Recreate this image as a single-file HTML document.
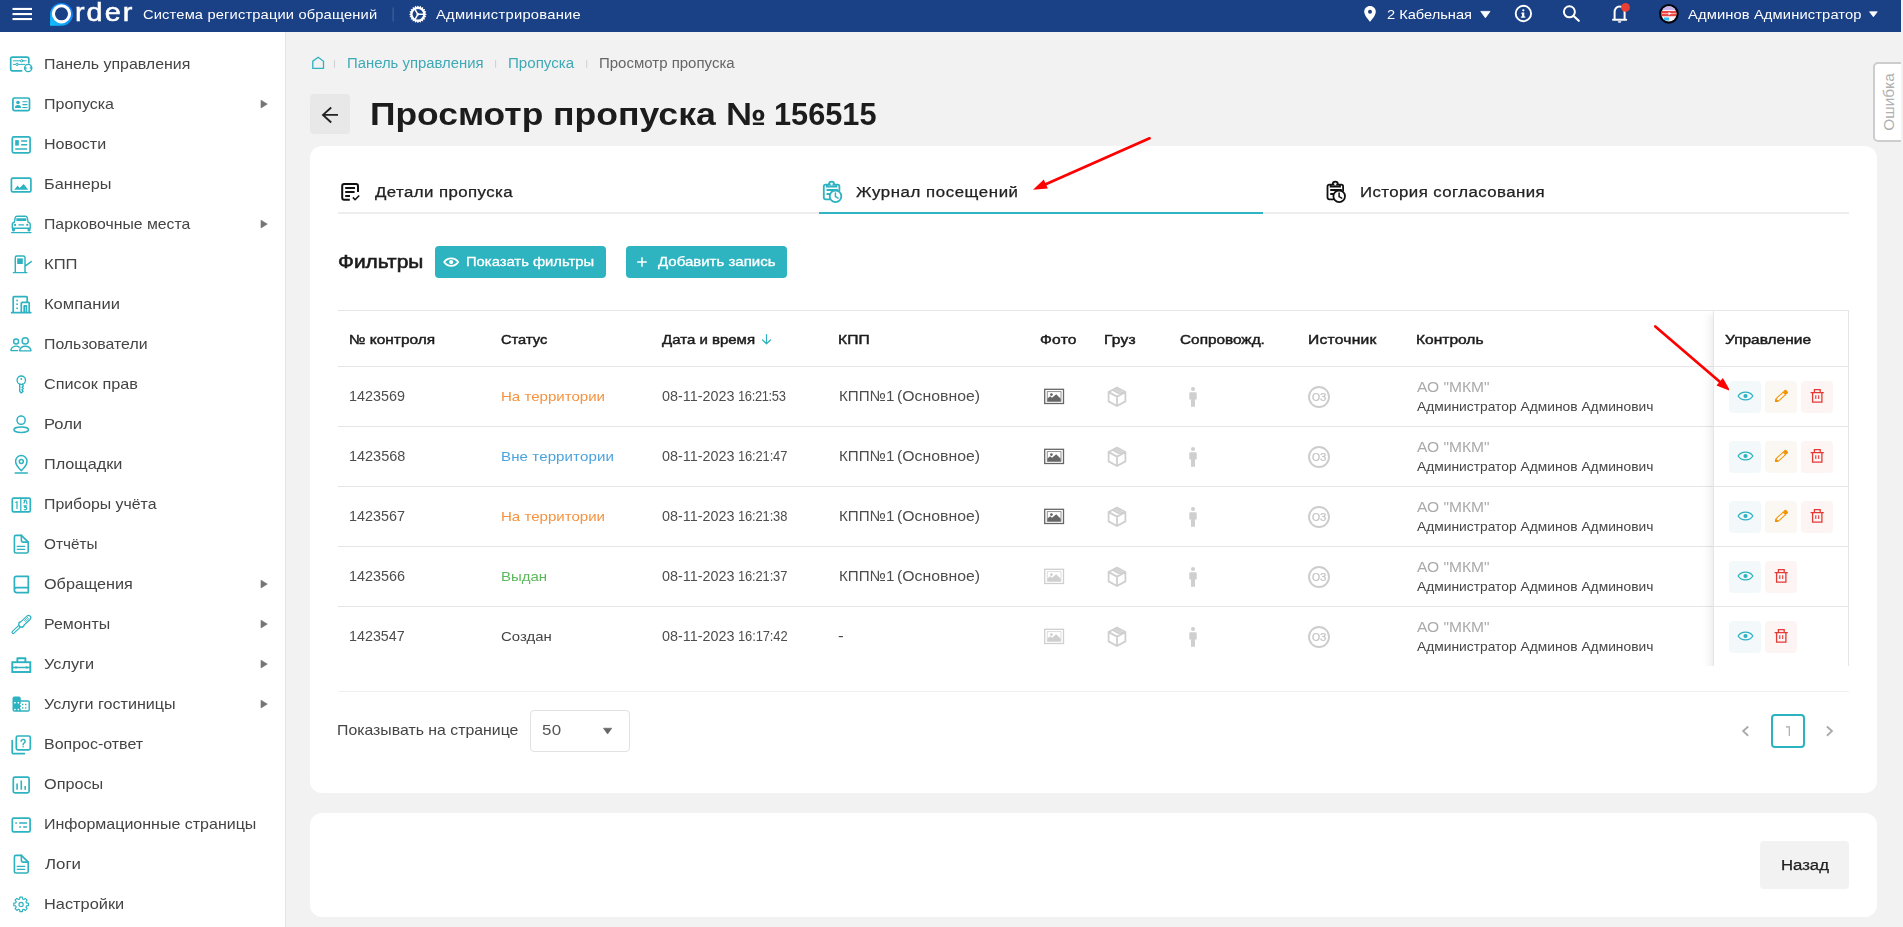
<!DOCTYPE html>
<html lang="ru"><head><meta charset="utf-8"><title>Просмотр пропуска</title>
<style>
html,body{margin:0;padding:0}
body{width:1903px;height:927px;overflow:hidden;position:relative;background:#f2f2f2;font-family:"Liberation Sans",sans-serif}
.a{position:absolute}
.t{position:absolute;white-space:pre;line-height:normal;transform-origin:0 50%}
svg{position:absolute;overflow:visible}
.ln{position:absolute;height:1px;background:#e6e6e6}
.ab{position:absolute;width:32px;height:32px;border-radius:4px}
</style></head><body>
<!-- top bar -->
<div class="a" style="left:0;top:0;width:1901px;height:32px;background:#1a4085"></div>
<!-- sidebar -->
<div class="a" style="left:0;top:32px;width:285px;height:895px;background:#fff;border-right:1px solid #e3e3e3"></div>
<!-- error tab -->
<div class="a" style="left:1873px;top:62px;width:40px;height:76px;background:#fff;border:2px solid #cdcdcd;border-radius:5px"></div>
<div class="t" style="left:1859px;top:93px;width:60px;height:18px;line-height:18px;text-align:center;font-size:14px;color:#b0b0b0;transform-origin:50% 50%;transform:rotate(-90deg) scaleX(1.1)">Ошибка</div>
<div class="a" style="left:1901px;top:0;width:2px;height:927px;background:#f2f2f2;z-index:5"></div>
<!-- back button -->
<div class="a" style="left:310px;top:94px;width:40px;height:40px;background:#e8e8e8;border-radius:4px"></div>
<!-- card 1 -->
<div class="a" style="left:310px;top:146px;width:1567px;height:647px;background:#fff;border-radius:12px"></div>
<!-- card 2 -->
<div class="a" style="left:310px;top:813px;width:1567px;height:104px;background:#fff;border-radius:12px"></div>
<!-- tabs lines -->
<div class="a" style="left:338px;top:212px;width:1511px;height:2px;background:#eeeeee"></div>
<div class="a" style="left:819px;top:212px;width:444px;height:2px;background:#30b6c3"></div>
<!-- filter buttons -->
<div class="a" style="left:435px;top:246px;width:171px;height:32px;background:#2eb4c1;border-radius:4px"></div>
<div class="a" style="left:626px;top:246px;width:161px;height:32px;background:#2eb4c1;border-radius:4px"></div>
<!-- table lines -->
<div class="ln" style="left:338px;top:310px;width:1511px"></div>
<div class="ln" style="left:338px;top:366px;width:1511px"></div>
<div class="ln" style="left:338px;top:426px;width:1511px"></div>
<div class="ln" style="left:338px;top:486px;width:1511px"></div>
<div class="ln" style="left:338px;top:546px;width:1511px"></div>
<div class="ln" style="left:338px;top:606px;width:1511px"></div>
<div class="ln" style="left:338px;top:691px;width:1511px;background:#efefef"></div>
<!-- fixed column shadow + borders -->
<div class="a" style="left:1702px;top:311px;width:11px;height:355px;background:linear-gradient(to right,rgba(0,0,0,0),rgba(0,0,0,.008) 30%,rgba(0,0,0,.026) 65%,rgba(0,0,0,.058));-webkit-mask-image:linear-gradient(to bottom,transparent,#000 7px)"></div>
<div class="a" style="left:1713px;top:311px;width:1px;height:355px;background:#e6e6e6"></div>
<div class="a" style="left:1848px;top:311px;width:1px;height:355px;background:#e6e6e6"></div>
<!-- select -->
<div class="a" style="left:530px;top:710px;width:98px;height:40px;border:1px solid #e2e2e2;border-radius:4px;background:#fff"></div>
<!-- page box -->
<div class="a" style="left:1771px;top:714px;width:30px;height:30px;border:2px solid #2cb3c1;border-radius:4px;background:#fff"></div>
<!-- back btn bottom -->
<div class="a" style="left:1760px;top:841px;width:89px;height:48px;background:#f2f2f2;border-radius:4px"></div>
<svg style="left:0;top:0" width="1903" height="927" viewBox="0 0 1903 927">
<g fill="#fff"><rect x="12.5" y="7.9" width="19.5" height="2.1"/><rect x="12.5" y="13" width="19.5" height="2.1"/><rect x="12.5" y="18" width="19.5" height="2.1"/></g>
<defs><linearGradient id="lg" x1="0" y1="1" x2="1" y2="0"><stop offset="0" stop-color="#12c3ff"/><stop offset="1" stop-color="#0a6cf5"/></linearGradient></defs>
<path d="M50.1 25.7 L50.1 14 A11.4 11.4 0 1 1 61.5 25.7 Z" fill="url(#lg)"/>
<circle cx="61.5" cy="13.8" r="8.1" fill="#1a4085" stroke="#fff" stroke-width="3.1"/>
<rect x="392.6" y="7.5" width="1" height="14" fill="#4a689f"/>
<polygon points="426.80,14.30 425.11,15.44 426.36,17.05 424.40,17.61 425.10,19.53 423.06,19.46 423.13,21.50 421.21,20.80 420.65,22.76 419.04,21.51 417.90,23.20 416.76,21.51 415.15,22.76 414.59,20.80 412.67,21.50 412.74,19.46 410.70,19.53 411.40,17.61 409.44,17.05 410.69,15.44 409.00,14.30 410.69,13.16 409.44,11.55 411.40,10.99 410.70,9.07 412.74,9.14 412.67,7.10 414.59,7.80 415.15,5.84 416.76,7.09 417.90,5.40 419.04,7.09 420.65,5.84 421.21,7.80 423.13,7.10 423.06,9.14 425.10,9.07 424.40,10.99 426.36,11.55 425.11,13.16" fill="#fff"/>
<circle cx="417.9" cy="14.3" r="5.3" fill="#1a4085"/>
<g stroke="#fff" stroke-width="1.5" stroke-linecap="round"><line x1="417.9" y1="14.3" x2="423.5" y2="14.3"/><line x1="417.9" y1="14.3" x2="415.0" y2="9.3"/><line x1="417.9" y1="14.3" x2="415.0" y2="19.3"/></g>
<circle cx="417.9" cy="14.3" r="1.3" fill="#fff"/>
<path d="M1370 6 C1366.6 6 1364.2 8.6 1364.2 11.8 C1364.2 15.8 1370 21.7 1370 21.7 C1370 21.7 1375.8 15.8 1375.8 11.8 C1375.8 8.6 1373.4 6 1370 6 Z" fill="#fff"/><circle cx="1370" cy="11.7" r="2" fill="#1a4085"/>
<path d="M1480.8 11.4 L1490 11.4 L1485.4 17.8 Z" fill="#fff" stroke="#fff" stroke-width="0.8" stroke-linejoin="round"/>
<circle cx="1523.4" cy="13.5" r="7.7" fill="none" stroke="#fff" stroke-width="1.9"/>
<g fill="#fff"><circle cx="1523.3" cy="10.3" r="1.15"/><path d="M1521.6 12.4 h2.7 v4 h1 v1.3 h-4.4 v-1.3 h1.1 v-2.7 h-0.9 z"/></g>
<circle cx="1569.4" cy="11.8" r="5.5" fill="none" stroke="#fff" stroke-width="2"/><line x1="1573.6" y1="16" x2="1578.8" y2="20.8" stroke="#fff" stroke-width="2.2" stroke-linecap="round"/>
<path d="M1613 19.8 L1626.2 19.8 M1614.6 19.3 L1614.6 12.2 C1614.6 9 1616.6 6.6 1619.6 6.6 C1622.6 6.6 1624.6 9 1624.6 12.2 L1624.6 19.3" fill="none" stroke="#fff" stroke-width="2" stroke-linecap="round" stroke-linejoin="round"/>
<path d="M1617.8 21.2 h3.6 a1.8 1.5 0 0 1 -3.6 0z" fill="#fff"/>
<circle cx="1625.5" cy="7.4" r="4.4" fill="#ea3e33"/>
<circle cx="1668.9" cy="13.8" r="9.9" fill="#050510"/>
<clipPath id="av"><circle cx="1668.9" cy="13.8" r="7.6"/></clipPath>
<g clip-path="url(#av)"><rect x="1660" y="5" width="18" height="18" fill="#f4f2fb"/><rect x="1660" y="5" width="18" height="5" fill="#c9b6ee"/><rect x="1660" y="11" width="18" height="5.2" fill="#ee4444"/><rect x="1664" y="17.5" width="5" height="3" fill="#39c0f0"/><path d="M1662 13.6 h14" stroke="#ffd0d0" stroke-width="0.8"/><path d="M1668.5 12 l3 1.6 l-3 1.6z" fill="#fff"/></g>
<path d="M1869.6 11.8 L1877.2 11.8 L1873.4 16.8 Z" fill="#fff" stroke="#fff" stroke-width="0.8" stroke-linejoin="round"/>
<g stroke="#2cb2c0" stroke-width="1.7" fill="none" stroke-linecap="round" stroke-linejoin="round" >
<path d="M21.6 70.8 H12.5 a1.8 1.8 0 0 1 -1.8 -1.8 V58.9 a1.8 1.8 0 0 1 1.8 -1.8 H27 a1.8 1.8 0 0 1 1.8 1.8 V62.8"/>
<g stroke-width="1"><path d="M13.4 60.8 H26 M13.4 64.4 H25"/><circle cx="21.7" cy="60.8" r="1.2" fill="#fff"/><circle cx="17.1" cy="64.4" r="1.2" fill="#fff"/></g>
<circle cx="28.2" cy="68" r="3.6" stroke-width="1.3"/><path d="M30.9 66.9 l1.2 1.2 l-1.7 0.2z M25.5 69.1 l-1.2 -1.2 l1.7 -0.2z" fill="#2cb2c0" stroke-width="0.8"/>
<rect x="12.9" y="98" width="16.6" height="12.6" rx="1.6"/>
<g stroke="none" fill="#2cb2c0"><circle cx="18" cy="102.5" r="1.8"/><path d="M14.9 107.9 a3.1 3 0 0 1 6.2 0z"/></g>
<g stroke-width="1.1"><path d="M22.8 101.7 H27.1 M22.8 104.6 H27.1 M22.8 107.5 H27.1"/></g>
<rect x="12.3" y="136.9" width="17.8" height="16" rx="1.6"/>
<rect x="15.2" y="140.1" width="3.6" height="5.5" fill="#2cb2c0" stroke="none"/>
<g stroke-linecap="butt" stroke-width="1.5"><path d="M21.1 141.1 H27.1 M21.1 144.8 H27.1 M15.2 149 H27.1"/></g>
<rect x="11.4" y="178.1" width="19.5" height="13.8" rx="1.4"/>
<path d="M14.2 189.8 L17.6 185.6 L19.6 188 L23.7 183.9 L28.2 189.8 Z" fill="#2cb2c0" stroke="none"/>
<g stroke-width="1.4"><path d="M12.3 228.3 V224.6 a2.2 2.2 0 0 1 2 -2.2 L15.2 217.8 a2 2 0 0 1 1.9 -1.5 H25.4 a2 2 0 0 1 1.9 1.5 L28.2 222.4 a2.2 2.2 0 0 1 2 2.2 V228.3 Z"/></g>
<rect x="16.3" y="218.3" width="10" height="2.6" rx="0.5" fill="#2cb2c0" stroke="none"/>
<g fill="#2cb2c0" stroke="none"><circle cx="15.1" cy="224.9" r="1.1"/><circle cx="27.3" cy="224.9" r="1.1"/><rect x="18.3" y="224.2" width="5.8" height="1.4" rx="0.6"/><path d="M12 228.3 h3 v1.6 a1.5 1.5 0 0 1 -3 0z M27.5 228.3 h3 v1.6 a1.5 1.5 0 0 1 -3 0z"/></g>
<path d="M11.6 232.6 H31" stroke-width="1.3"/>
<g stroke-width="1.45"><path d="M15.3 272.4 V257.6 a1.6 1.6 0 0 1 1.6 -1.6 H23.4 a1.6 1.6 0 0 1 1.6 1.6 V272.4 M13.4 272.6 H26.9 M25.4 265.8 L31.3 261.6"/></g>
<rect x="17.2" y="258.4" width="5.6" height="5.6" fill="#2cb2c0" stroke="none"/>
<g stroke-width="1.7"><path d="M13.2 312.4 V297.4 a0.8 0.8 0 0 1 0.8 -0.8 H26.4 a0.8 0.8 0 0 1 0.8 0.8 V302 M21.3 312.4 V303.2 a0.8 0.8 0 0 1 0.8 -0.8 H28.4 a0.8 0.8 0 0 1 0.8 0.8 V312.4 M24.2 312.4 V305.8 H26.4 V312.4 M11.6 312.6 H30.8"/></g>
<g fill="#2cb2c0" stroke="none"><rect x="16.3" y="299.7" width="1.6" height="1.6"/><rect x="16.3" y="303.4" width="1.6" height="1.6"/><rect x="16.3" y="307.5" width="1.6" height="1.6"/></g>
<g stroke-width="1.4"><circle cx="16.1" cy="341.5" r="2.5"/><path d="M17.6 350.6 H11.6 a0.7 0.7 0 0 1 -0.7 -0.9 a5.3 4.6 0 0 1 8.4 -2.6"/><circle cx="25.2" cy="340.9" r="3.1"/><path d="M19.6 350.5 a5.8 5.2 0 0 1 11.4 0 a0.4 0.4 0 0 1 -0.4 0.4 H20 a0.4 0.4 0 0 1 -0.4 -0.4z"/></g>
<g stroke-width="1.35"><circle cx="21.3" cy="380.2" r="4.2"/><path d="M19.7 384.1 V391.3 L21.3 392.9 L23.1 391.2 L21.9 390 L23.3 388.6 L22 387.3 L23.3 386 L22.6 384.3"/></g><circle cx="21.3" cy="379" r="0.9" fill="#2cb2c0" stroke="none"/>
<g stroke-width="1.5"><circle cx="21.1" cy="420.2" r="4.1"/><ellipse cx="21.2" cy="429.8" rx="7.3" ry="2.7"/></g>
<g stroke-width="1.5"><path d="M21.3 470.6 C21.3 470.6 15.6 465.4 15.6 461.3 a5.7 5.7 0 0 1 11.4 0 C27 465.4 21.3 470.6 21.3 470.6z"/><circle cx="21.3" cy="461.4" r="2"/><path d="M15.2 473 H27.3" stroke-width="1.5"/></g>
<rect x="12.3" y="498.1" width="18" height="13.8" rx="1.4"/><path d="M20.8 498.4 V511.6" stroke-width="1.3"/>
<g stroke-width="1.2" stroke-linejoin="miter" stroke-linecap="butt"><path d="M15.3 502.5 L17 501.9 V508.9"/><path d="M23.6 500.6 L25.4 500.2 L23.7 503.4 M26.6 500.4 L26.9 504.2 M23.6 505.8 H27 M24 507.4 C25.5 506.9 26.9 507.4 26.8 508.5 C26.7 509.6 25 510 23.8 509.6"/></g>
<g stroke-width="1.6"><path d="M21.4 535.4000000000001 H16 a1.6 1.6 0 0 0 -1.6 1.6 V551.4000000000001 a1.6 1.6 0 0 0 1.6 1.6 H26.6 a1.6 1.6 0 0 0 1.6 -1.6 V542.1 Z"/><path d="M21.4 535.4000000000001 V540.5 a1.6 1.6 0 0 0 1.6 1.6 H28.2"/><path d="M17.2 546.3000000000001 H24.8 M17.2 549.3000000000001 H24.8" stroke-width="1.25"/></g>
<g stroke-width="1.7"><path d="M28.3 576.4 H16.4 a2 2 0 0 0 -2 2 V590.3 a2.3 2.3 0 0 0 2.3 2.3 H28.3 V576.4 M14.4 590 a2.3 2.3 0 0 1 2.3 -2.3 H28.3"/></g>
<g stroke-width="1.15" transform="translate(21.5 624.4) rotate(-43.5)"><rect x="-12.6" y="-1.15" width="10" height="2.3" rx="1.15"/><path d="M-2.6 -1.9 h1.4 v-1 h2 v0.6 h8.8 a2.3 2.3 0 0 1 2.3 2.3 v0 a2.3 2.3 0 0 1 -2.3 2.3 h-8.8 v0.6 h-2 v-1 h-1.4z"/><path d="M4.5 -0.8 h5 M4.5 0.8 h5" stroke-width="0.8"/></g>
<g stroke-width="1.9" stroke-linejoin="miter"><rect x="12.3" y="662.2" width="18" height="9.8" /><path d="M17.4 662 V658.2 H25.4 V662" stroke-linejoin="round"/><path d="M12.3 667.4 H30.3" stroke-width="1.5"/></g><circle cx="16" cy="667.4" r="1.1" fill="#2cb2c0" stroke="none"/><circle cx="26.6" cy="667.4" r="1.1" fill="#2cb2c0" stroke="none"/>
<path d="M12.5 698.4 a2 2 0 0 1 2 -2 h4.3 a2 2 0 0 1 2 2 V711.7 H14.5 a2 2 0 0 1 -2 -2z" fill="#2cb2c0" stroke="none"/>
<path d="M20.8 701 H28 a1.2 1.2 0 0 1 1.2 1.2 V709.8 a1.2 1.2 0 0 1 -1.2 1.2 H20.8" stroke-width="1.4"/>
<g fill="#fff" stroke="none"><rect x="14.2" y="702" width="1.5" height="1.5"/><rect x="17.6" y="702" width="1.5" height="1.5"/><rect x="14.2" y="708.8" width="1.5" height="1.5"/><rect x="17.6" y="708.8" width="1.5" height="1.5"/><rect x="20" y="703.8" width="1.2" height="1.4"/><rect x="20" y="707.2" width="1.2" height="1.4"/></g>
<g fill="#2cb2c0" stroke="none"><rect x="22" y="703.8" width="1.4" height="1.4"/><rect x="25" y="703.8" width="1.4" height="1.4"/><rect x="22" y="707.2" width="1.4" height="1.4"/><rect x="25" y="707.2" width="1.4" height="1.4"/></g>
<g stroke-width="1.7"><rect x="16.3" y="736" width="14" height="13.8" rx="1.5"/><path d="M12.2 740.6 V752.4 a1.3 1.3 0 0 0 1.3 1.3 H24.4"/></g>
<path d="M21.1 741.3 a2 2 0 1 1 2.9 1.9 c-0.7 0.4 -0.9 0.8 -0.9 1.5" stroke-width="1.5"/><circle cx="23.1" cy="746.8" r="0.8" fill="#2cb2c0" stroke="none"/>
<rect x="13.3" y="777.1" width="15.8" height="15.8" rx="1.6"/><g stroke-linecap="butt" stroke-width="1.6"><path d="M17.1 783.4 V789.8 M21.3 780.4 V789.8 M25.2 786.1 V789.8"/></g>
<rect x="12.3" y="818.1" width="17.8" height="13.8" rx="1.5"/><g stroke-linecap="butt" stroke-width="1.5"><path d="M15.3 822.9 H16.9 M19.1 822.9 H26.9 M19.2 827 H20.9 M23.2 827 H26.9"/></g>
<g stroke-width="1.6"><path d="M21.4 855.4000000000001 H16 a1.6 1.6 0 0 0 -1.6 1.6 V871.4000000000001 a1.6 1.6 0 0 0 1.6 1.6 H26.6 a1.6 1.6 0 0 0 1.6 -1.6 V862.1 Z"/><path d="M21.4 855.4000000000001 V860.5 a1.6 1.6 0 0 0 1.6 1.6 H28.2"/><path d="M17.2 866.3000000000001 H24.8 M17.2 869.3000000000001 H24.8" stroke-width="1.25"/></g>
<polygon points="19.61,899.00 19.85,897.11 22.35,897.11 22.59,899.00 23.86,899.53 25.37,898.36 27.14,900.13 25.97,901.64 26.50,902.91 28.39,903.15 28.39,905.65 26.50,905.89 25.97,907.16 27.14,908.67 25.37,910.44 23.86,909.27 22.59,909.80 22.35,911.69 19.85,911.69 19.61,909.80 18.34,909.27 16.83,910.44 15.06,908.67 16.23,907.16 15.70,905.89 13.81,905.65 13.81,903.15 15.70,902.91 16.23,901.64 15.06,900.13 16.83,898.36 18.34,899.53" stroke-width="1.15" />
<circle cx="21.1" cy="904.4" r="2.1" stroke-width="1.15"/>
</g>
<path d="M261 100.19999999999999 L267.3 104.1 L261 108.0 Z" fill="#757575" stroke="#757575" stroke-width="0.6" stroke-linejoin="round"/>
<path d="M261 220.2 L267.3 224.1 L261 228.0 Z" fill="#757575" stroke="#757575" stroke-width="0.6" stroke-linejoin="round"/>
<path d="M261 580.2 L267.3 584.1 L261 588.0 Z" fill="#757575" stroke="#757575" stroke-width="0.6" stroke-linejoin="round"/>
<path d="M261 620.2 L267.3 624.1 L261 628.0 Z" fill="#757575" stroke="#757575" stroke-width="0.6" stroke-linejoin="round"/>
<path d="M261 660.2 L267.3 664.1 L261 668.0 Z" fill="#757575" stroke="#757575" stroke-width="0.6" stroke-linejoin="round"/>
<path d="M261 700.2 L267.3 704.1 L261 708.0 Z" fill="#757575" stroke="#757575" stroke-width="0.6" stroke-linejoin="round"/>
<path d="M312.8 68.4 V61.2 L318.2 57.2 L323.5 61.2 V68.4 Z" fill="none" stroke="#2cb2c0" stroke-width="1.3" stroke-linejoin="miter"/>
<rect x="334.0" y="60.2" width="1" height="7.5" fill="#cfcfcf"/>
<rect x="495.1" y="60.2" width="1" height="7.5" fill="#cfcfcf"/>
<rect x="586.2" y="60.2" width="1" height="7.5" fill="#cfcfcf"/>
<path d="M338 114.9 H323 M331.2 107.5 L323 114.9 L331.2 122.5" fill="none" stroke="#222" stroke-width="1.9" stroke-linecap="butt" stroke-linejoin="miter"/>
<g fill="none" stroke="#111" stroke-width="2" stroke-linecap="butt" stroke-linejoin="round"><path d="M349.8 199.8 H344.2 a2 2 0 0 1 -2 -2 V186 a2 2 0 0 1 2 -2 H356 a2 2 0 0 1 2 2 V192"/><path d="M345.2 188 H355 M345.2 191.9 H354.6 M345.2 196 H350"/><path d="M352.9 197.4 L355.1 199.7 L359.2 195.5" stroke-width="1.6"/></g>
<g transform="translate(0 0)" fill="none" stroke="#2cb2c0" stroke-width="1.8" stroke-linecap="round" stroke-linejoin="round"><path d="M829.6 199.3 H825.5 a1.7 1.7 0 0 1 -1.7 -1.7 V186.4 a1.7 1.7 0 0 1 1.7 -1.7 H837.7 a1.7 1.7 0 0 1 1.7 1.7 V190.6"/><path d="M826.9 184.9 V186.5 H836.3 V184.9" stroke-linejoin="miter"/><path d="M829 184.3 a2.6 2.6 0 0 1 5.2 0" stroke-width="1.7"/><path d="M827.2 190 H837.4 M827.2 194 H829.6"/><circle cx="835.5" cy="196.3" r="5.8"/><path d="M835.4 192.9 V196.7 L838 198.2" stroke-width="1.5"/></g>
<circle cx="831.6" cy="184.2" r="1.05" fill="#fff"/>
<g transform="translate(503.7 0)" fill="none" stroke="#111" stroke-width="1.8" stroke-linecap="round" stroke-linejoin="round"><path d="M829.6 199.3 H825.5 a1.7 1.7 0 0 1 -1.7 -1.7 V186.4 a1.7 1.7 0 0 1 1.7 -1.7 H837.7 a1.7 1.7 0 0 1 1.7 1.7 V190.6"/><path d="M826.9 184.9 V186.5 H836.3 V184.9" stroke-linejoin="miter"/><path d="M829 184.3 a2.6 2.6 0 0 1 5.2 0" stroke-width="1.7"/><path d="M827.2 190 H837.4 M827.2 194 H829.6"/><circle cx="835.5" cy="196.3" r="5.8"/><path d="M835.4 192.9 V196.7 L838 198.2" stroke-width="1.5"/></g>
<circle cx="1335.3" cy="184.2" r="1.05" fill="#fff"/>
<line x1="1149.6" y1="138.3" x2="1044.0" y2="184.9" stroke="#ff0000" stroke-width="2.7" stroke-linecap="round"/>
<polygon points="1033,189.7 1043.8,179.6 1047.8,188.5" fill="#ff0000"/>
<line x1="1655.3" y1="326.5" x2="1721.2" y2="383.1" stroke="#ff0000" stroke-width="2.7" stroke-linecap="round"/>
<polygon points="1730.3,390.9 1716.5,385.5 1722.9,378.1" fill="#ff0000"/>
<path d="M444.2 262.1 C447.34999999999997 257.06 455.05 257.06 458.2 262.1 C455.05 267.14000000000004 447.34999999999997 267.14000000000004 444.2 262.1Z" fill="none" stroke="#fff" stroke-width="1.8" stroke-linejoin="round"/>
<circle cx="451.2" cy="262.1" r="2.1" fill="#fff"/>
<path d="M637.2 262 H646.8 M642 257.2 V266.8" stroke="#fff" stroke-width="1.5" fill="none"/>
<path d="M766.5 334.6 V343.6 M762.6 340 L766.5 343.8 L770.4 340" fill="none" stroke="#2cb2c0" stroke-width="1.2" stroke-linecap="round" stroke-linejoin="round"/>
<g transform="translate(0 0)"><rect x="1044.7" y="389.3" width="18.8" height="14.2" fill="#fff" stroke="#666" stroke-width="1.3"/><rect x="1047.2" y="391.7" width="13.8" height="9.6" fill="none" stroke="#666" stroke-width="0.7"/><path d="M1047.4 401.2 V398.6 L1050.2 396.2 L1052 397.8 L1056.2 394.3 L1060.8 398.8 V401.2 Z" fill="#666"/><circle cx="1051.4" cy="394.6" r="1.4" fill="#666"/></g>
<g transform="translate(0 0)" fill="none" stroke="#cfcfcf" stroke-width="1.8" stroke-linejoin="round"><path d="M1117 387.6 L1125.4 392 V401.4 L1117 406 L1108.6 401.4 V392 Z M1108.8 392.1 L1117 396.6 L1125.2 392.1 M1117 396.6 V405.8 M1112.6 389.9 L1121 394.4 M1115 388.8 L1123.2 393.2" /></g>
<g transform="translate(0 0)" fill="#cfcfcf"><circle cx="1193" cy="388.9" r="2"/><path d="M1189.3 393.2 a1 1 0 0 1 1 -1 h5.4 a1 1 0 0 1 1 1 V399.4 h-1.7 V406.8 h-4 V399.4 h-1.7 Z"/></g>
<circle cx="1319" cy="397" r="10" fill="none" stroke="#cdcdcd" stroke-width="1.9"/>
<rect x="1729" y="381" width="32" height="32" rx="4" fill="#f3f9fa"/>
<path d="M1738.1 396 C1741.43 390.84 1749.57 390.84 1752.9 396 C1749.57 401.16 1741.43 401.16 1738.1 396Z" fill="none" stroke="#2cb2c0" stroke-width="1.3" stroke-linejoin="round"/>
<circle cx="1745.5" cy="396" r="2.1" fill="#2cb2c0"/>
<rect x="1765" y="381" width="32" height="32" rx="4" fill="#fbf8f3"/>
<g transform="translate(1781 396.4) rotate(-42.5)" stroke="#f39200" stroke-width="1" stroke-linejoin="round" fill="none"><path d="M-7.6 0 L-5 -1.7 H4.6 V1.7 H-5 Z"/><path d="M5.4 -1.7 h1.6 a0.6 0.6 0 0 1 0.6 0.6 v2.2 a0.6 0.6 0 0 1 -0.6 0.6 h-1.6z" fill="#f39200"/><path d="M-7.6 0 L-5.6 -1.3 V1.3Z" fill="#f39200"/></g>
<rect x="1801" y="381" width="32" height="32" rx="4" fill="#fdf4f4"/>
<g transform="translate(0 0)" fill="none" stroke="#e53935" stroke-width="1.3"><path d="M1810.6 392.6 H1823.8 M1814.4 392.4 V389.6 H1820.2 V392.4 M1812.6 392.8 V402.2 H1821.9 V392.8"/><path d="M1815.8 395.2 V399 M1818.7 395.2 V399" stroke-width="1.1"/></g>
<g transform="translate(0 60)"><rect x="1044.7" y="389.3" width="18.8" height="14.2" fill="#fff" stroke="#666" stroke-width="1.3"/><rect x="1047.2" y="391.7" width="13.8" height="9.6" fill="none" stroke="#666" stroke-width="0.7"/><path d="M1047.4 401.2 V398.6 L1050.2 396.2 L1052 397.8 L1056.2 394.3 L1060.8 398.8 V401.2 Z" fill="#666"/><circle cx="1051.4" cy="394.6" r="1.4" fill="#666"/></g>
<g transform="translate(0 60)" fill="none" stroke="#cfcfcf" stroke-width="1.8" stroke-linejoin="round"><path d="M1117 387.6 L1125.4 392 V401.4 L1117 406 L1108.6 401.4 V392 Z M1108.8 392.1 L1117 396.6 L1125.2 392.1 M1117 396.6 V405.8 M1112.6 389.9 L1121 394.4 M1115 388.8 L1123.2 393.2" /></g>
<g transform="translate(0 60)" fill="#cfcfcf"><circle cx="1193" cy="388.9" r="2"/><path d="M1189.3 393.2 a1 1 0 0 1 1 -1 h5.4 a1 1 0 0 1 1 1 V399.4 h-1.7 V406.8 h-4 V399.4 h-1.7 Z"/></g>
<circle cx="1319" cy="457" r="10" fill="none" stroke="#cdcdcd" stroke-width="1.9"/>
<rect x="1729" y="441" width="32" height="32" rx="4" fill="#f3f9fa"/>
<path d="M1738.1 456 C1741.43 450.84 1749.57 450.84 1752.9 456 C1749.57 461.16 1741.43 461.16 1738.1 456Z" fill="none" stroke="#2cb2c0" stroke-width="1.3" stroke-linejoin="round"/>
<circle cx="1745.5" cy="456" r="2.1" fill="#2cb2c0"/>
<rect x="1765" y="441" width="32" height="32" rx="4" fill="#fbf8f3"/>
<g transform="translate(1781 456.4) rotate(-42.5)" stroke="#f39200" stroke-width="1" stroke-linejoin="round" fill="none"><path d="M-7.6 0 L-5 -1.7 H4.6 V1.7 H-5 Z"/><path d="M5.4 -1.7 h1.6 a0.6 0.6 0 0 1 0.6 0.6 v2.2 a0.6 0.6 0 0 1 -0.6 0.6 h-1.6z" fill="#f39200"/><path d="M-7.6 0 L-5.6 -1.3 V1.3Z" fill="#f39200"/></g>
<rect x="1801" y="441" width="32" height="32" rx="4" fill="#fdf4f4"/>
<g transform="translate(0 60)" fill="none" stroke="#e53935" stroke-width="1.3"><path d="M1810.6 392.6 H1823.8 M1814.4 392.4 V389.6 H1820.2 V392.4 M1812.6 392.8 V402.2 H1821.9 V392.8"/><path d="M1815.8 395.2 V399 M1818.7 395.2 V399" stroke-width="1.1"/></g>
<g transform="translate(0 120)"><rect x="1044.7" y="389.3" width="18.8" height="14.2" fill="#fff" stroke="#666" stroke-width="1.3"/><rect x="1047.2" y="391.7" width="13.8" height="9.6" fill="none" stroke="#666" stroke-width="0.7"/><path d="M1047.4 401.2 V398.6 L1050.2 396.2 L1052 397.8 L1056.2 394.3 L1060.8 398.8 V401.2 Z" fill="#666"/><circle cx="1051.4" cy="394.6" r="1.4" fill="#666"/></g>
<g transform="translate(0 120)" fill="none" stroke="#cfcfcf" stroke-width="1.8" stroke-linejoin="round"><path d="M1117 387.6 L1125.4 392 V401.4 L1117 406 L1108.6 401.4 V392 Z M1108.8 392.1 L1117 396.6 L1125.2 392.1 M1117 396.6 V405.8 M1112.6 389.9 L1121 394.4 M1115 388.8 L1123.2 393.2" /></g>
<g transform="translate(0 120)" fill="#cfcfcf"><circle cx="1193" cy="388.9" r="2"/><path d="M1189.3 393.2 a1 1 0 0 1 1 -1 h5.4 a1 1 0 0 1 1 1 V399.4 h-1.7 V406.8 h-4 V399.4 h-1.7 Z"/></g>
<circle cx="1319" cy="517" r="10" fill="none" stroke="#cdcdcd" stroke-width="1.9"/>
<rect x="1729" y="501" width="32" height="32" rx="4" fill="#f3f9fa"/>
<path d="M1738.1 516 C1741.43 510.84 1749.57 510.84 1752.9 516 C1749.57 521.16 1741.43 521.16 1738.1 516Z" fill="none" stroke="#2cb2c0" stroke-width="1.3" stroke-linejoin="round"/>
<circle cx="1745.5" cy="516" r="2.1" fill="#2cb2c0"/>
<rect x="1765" y="501" width="32" height="32" rx="4" fill="#fbf8f3"/>
<g transform="translate(1781 516.4) rotate(-42.5)" stroke="#f39200" stroke-width="1" stroke-linejoin="round" fill="none"><path d="M-7.6 0 L-5 -1.7 H4.6 V1.7 H-5 Z"/><path d="M5.4 -1.7 h1.6 a0.6 0.6 0 0 1 0.6 0.6 v2.2 a0.6 0.6 0 0 1 -0.6 0.6 h-1.6z" fill="#f39200"/><path d="M-7.6 0 L-5.6 -1.3 V1.3Z" fill="#f39200"/></g>
<rect x="1801" y="501" width="32" height="32" rx="4" fill="#fdf4f4"/>
<g transform="translate(0 120)" fill="none" stroke="#e53935" stroke-width="1.3"><path d="M1810.6 392.6 H1823.8 M1814.4 392.4 V389.6 H1820.2 V392.4 M1812.6 392.8 V402.2 H1821.9 V392.8"/><path d="M1815.8 395.2 V399 M1818.7 395.2 V399" stroke-width="1.1"/></g>
<g transform="translate(0 180)"><rect x="1044.7" y="389.3" width="18.8" height="14.2" fill="#fff" stroke="#cfcfcf" stroke-width="1.3"/><rect x="1047.2" y="391.7" width="13.8" height="9.6" fill="none" stroke="#cfcfcf" stroke-width="0.7"/><path d="M1047.4 401.2 V398.6 L1050.2 396.2 L1052 397.8 L1056.2 394.3 L1060.8 398.8 V401.2 Z" fill="#cfcfcf"/><circle cx="1051.4" cy="394.6" r="1.4" fill="#cfcfcf"/></g>
<g transform="translate(0 180)" fill="none" stroke="#cfcfcf" stroke-width="1.8" stroke-linejoin="round"><path d="M1117 387.6 L1125.4 392 V401.4 L1117 406 L1108.6 401.4 V392 Z M1108.8 392.1 L1117 396.6 L1125.2 392.1 M1117 396.6 V405.8 M1112.6 389.9 L1121 394.4 M1115 388.8 L1123.2 393.2" /></g>
<g transform="translate(0 180)" fill="#cfcfcf"><circle cx="1193" cy="388.9" r="2"/><path d="M1189.3 393.2 a1 1 0 0 1 1 -1 h5.4 a1 1 0 0 1 1 1 V399.4 h-1.7 V406.8 h-4 V399.4 h-1.7 Z"/></g>
<circle cx="1319" cy="577" r="10" fill="none" stroke="#cdcdcd" stroke-width="1.9"/>
<rect x="1729" y="561" width="32" height="32" rx="4" fill="#f3f9fa"/>
<path d="M1738.1 576 C1741.43 570.84 1749.57 570.84 1752.9 576 C1749.57 581.16 1741.43 581.16 1738.1 576Z" fill="none" stroke="#2cb2c0" stroke-width="1.3" stroke-linejoin="round"/>
<circle cx="1745.5" cy="576" r="2.1" fill="#2cb2c0"/>
<rect x="1765" y="561" width="32" height="32" rx="4" fill="#fdf4f4"/>
<g transform="translate(-36 180)" fill="none" stroke="#e53935" stroke-width="1.3"><path d="M1810.6 392.6 H1823.8 M1814.4 392.4 V389.6 H1820.2 V392.4 M1812.6 392.8 V402.2 H1821.9 V392.8"/><path d="M1815.8 395.2 V399 M1818.7 395.2 V399" stroke-width="1.1"/></g>
<g transform="translate(0 240)"><rect x="1044.7" y="389.3" width="18.8" height="14.2" fill="#fff" stroke="#cfcfcf" stroke-width="1.3"/><rect x="1047.2" y="391.7" width="13.8" height="9.6" fill="none" stroke="#cfcfcf" stroke-width="0.7"/><path d="M1047.4 401.2 V398.6 L1050.2 396.2 L1052 397.8 L1056.2 394.3 L1060.8 398.8 V401.2 Z" fill="#cfcfcf"/><circle cx="1051.4" cy="394.6" r="1.4" fill="#cfcfcf"/></g>
<g transform="translate(0 240)" fill="none" stroke="#cfcfcf" stroke-width="1.8" stroke-linejoin="round"><path d="M1117 387.6 L1125.4 392 V401.4 L1117 406 L1108.6 401.4 V392 Z M1108.8 392.1 L1117 396.6 L1125.2 392.1 M1117 396.6 V405.8 M1112.6 389.9 L1121 394.4 M1115 388.8 L1123.2 393.2" /></g>
<g transform="translate(0 240)" fill="#cfcfcf"><circle cx="1193" cy="388.9" r="2"/><path d="M1189.3 393.2 a1 1 0 0 1 1 -1 h5.4 a1 1 0 0 1 1 1 V399.4 h-1.7 V406.8 h-4 V399.4 h-1.7 Z"/></g>
<circle cx="1319" cy="637" r="10" fill="none" stroke="#cdcdcd" stroke-width="1.9"/>
<rect x="1729" y="621" width="32" height="32" rx="4" fill="#f3f9fa"/>
<path d="M1738.1 636 C1741.43 630.84 1749.57 630.84 1752.9 636 C1749.57 641.16 1741.43 641.16 1738.1 636Z" fill="none" stroke="#2cb2c0" stroke-width="1.3" stroke-linejoin="round"/>
<circle cx="1745.5" cy="636" r="2.1" fill="#2cb2c0"/>
<rect x="1765" y="621" width="32" height="32" rx="4" fill="#fdf4f4"/>
<g transform="translate(-36 240)" fill="none" stroke="#e53935" stroke-width="1.3"><path d="M1810.6 392.6 H1823.8 M1814.4 392.4 V389.6 H1820.2 V392.4 M1812.6 392.8 V402.2 H1821.9 V392.8"/><path d="M1815.8 395.2 V399 M1818.7 395.2 V399" stroke-width="1.1"/></g>
<path d="M1785.9 726.8 H1789.3 V735.9" fill="none" stroke="#a8a8a8" stroke-width="1.15" stroke-linejoin="miter"/>
<path d="M603.4 728.2 H611.8 L607.6 734 Z" fill="#666" stroke="#666" stroke-width="0.6" stroke-linejoin="round"/>
<path d="M1748.2 726.5 L1743.2 731.1 L1748.2 735.7" fill="none" stroke="#aaa" stroke-width="1.9"/>
<path d="M1826.9 726.5 L1831.9 731.1 L1826.9 735.7" fill="none" stroke="#aaa" stroke-width="1.9"/>
</svg>
<div class="t" style="left:143.2px;top:7px;font-size:13px;color:#fff;letter-spacing:0.13px;transform:scaleX(1.130);">Система регистрации обращений</div>
<div class="t" style="left:436.2px;top:7px;font-size:13px;color:#fff;letter-spacing:0.26px;transform:scaleX(1.130);">Администрирование</div>
<div class="t" style="left:1386.7px;top:7px;font-size:13px;color:#fff;transform:scaleX(1.124);">2 Кабельная</div>
<div class="t" style="left:1687.5px;top:7px;font-size:13px;color:#fff;letter-spacing:0.12px;transform:scaleX(1.130);">Админов Администратор</div>
<div class="t" style="left:75.1px;top:-2px;font-size:25px;color:#fff;letter-spacing:1.77px;transform:scaleX(1.150);-webkit-text-stroke:0.5px #fff;">rder</div>
<div class="t" style="left:43.9px;top:55px;font-size:15px;color:#444;transform:scaleX(1.062);">Панель управления</div>
<div class="t" style="left:43.9px;top:95px;font-size:15px;color:#444;transform:scaleX(1.066);">Пропуска</div>
<div class="t" style="left:43.9px;top:135px;font-size:15px;color:#444;transform:scaleX(1.071);">Новости</div>
<div class="t" style="left:43.9px;top:175px;font-size:15px;color:#444;transform:scaleX(1.083);">Баннеры</div>
<div class="t" style="left:43.9px;top:215px;font-size:15px;color:#444;transform:scaleX(1.053);">Парковочные места</div>
<div class="t" style="left:43.9px;top:255px;font-size:15px;color:#444;transform:scaleX(1.107);">КПП</div>
<div class="t" style="left:43.9px;top:295px;font-size:15px;color:#444;transform:scaleX(1.101);">Компании</div>
<div class="t" style="left:43.9px;top:335px;font-size:15px;color:#444;transform:scaleX(1.057);">Пользователи</div>
<div class="t" style="left:43.9px;top:375px;font-size:15px;color:#444;transform:scaleX(1.081);">Список прав</div>
<div class="t" style="left:43.9px;top:415px;font-size:15px;color:#444;transform:scaleX(1.103);">Роли</div>
<div class="t" style="left:43.9px;top:455px;font-size:15px;color:#444;transform:scaleX(1.081);">Площадки</div>
<div class="t" style="left:43.9px;top:495px;font-size:15px;color:#444;transform:scaleX(1.057);">Приборы учёта</div>
<div class="t" style="left:44.0px;top:535px;font-size:15px;color:#444;transform:scaleX(1.022);">Отчёты</div>
<div class="t" style="left:43.9px;top:575px;font-size:15px;color:#444;transform:scaleX(1.080);">Обращения</div>
<div class="t" style="left:43.9px;top:615px;font-size:15px;color:#444;transform:scaleX(1.062);">Ремонты</div>
<div class="t" style="left:43.9px;top:655px;font-size:15px;color:#444;transform:scaleX(1.086);">Услуги</div>
<div class="t" style="left:43.9px;top:695px;font-size:15px;color:#444;transform:scaleX(1.074);">Услуги гостиницы</div>
<div class="t" style="left:43.9px;top:735px;font-size:15px;color:#444;transform:scaleX(1.065);">Вопрос-ответ</div>
<div class="t" style="left:43.9px;top:775px;font-size:15px;color:#444;transform:scaleX(1.083);">Опросы</div>
<div class="t" style="left:43.9px;top:815px;font-size:15px;color:#444;transform:scaleX(1.067);">Информационные страницы</div>
<div class="t" style="left:45.0px;top:855px;font-size:15px;color:#444;transform:scaleX(1.123);">Логи</div>
<div class="t" style="left:43.9px;top:895px;font-size:15px;color:#444;transform:scaleX(1.090);">Настройки</div>
<div class="t" style="left:346.6px;top:55px;font-size:14px;color:#3eaab6;transform:scaleX(1.062);">Панель управления</div>
<div class="t" style="left:507.8px;top:55px;font-size:14px;color:#3eaab6;transform:scaleX(1.080);">Пропуска</div>
<div class="t" style="left:598.9px;top:55px;font-size:14px;color:#666;transform:scaleX(1.071);">Просмотр пропуска</div>
<div class="t" style="left:370.1px;top:96px;font-size:32px;font-weight:700;color:#1c1c1c;transform:scaleX(1.106);">Просмотр</div>
<div class="t" style="left:552.7px;top:96px;font-size:32px;font-weight:700;color:#1c1c1c;transform:scaleX(1.112);">пропуска</div>
<div class="t" style="left:726.1px;top:96px;font-size:32px;font-weight:700;color:#1c1c1c;transform:scaleX(1.128);">№</div>
<div class="t" style="left:774.3px;top:96px;font-size:32px;font-weight:700;color:#1c1c1c;transform:scaleX(0.960);">156515</div>
<div class="t" style="left:375.2px;top:184px;font-size:14px;color:#222;letter-spacing:0.36px;transform:scaleX(1.200);-webkit-text-stroke:0.25px #222;">Детали пропуска</div>
<div class="t" style="left:855.8px;top:184px;font-size:14px;color:#222;letter-spacing:0.49px;transform:scaleX(1.200);-webkit-text-stroke:0.25px #222;">Журнал посещений</div>
<div class="t" style="left:1359.5px;top:184px;font-size:14px;color:#222;letter-spacing:0.36px;transform:scaleX(1.200);-webkit-text-stroke:0.25px #222;">История согласования</div>
<div class="t" style="left:337.5px;top:252px;font-size:18px;color:#1c1c1c;transform:scaleX(1.162);-webkit-text-stroke:0.58px #1c1c1c;">Фильтры</div>
<div class="t" style="left:465.9px;top:254px;font-size:13px;color:#fff;transform:scaleX(1.137);-webkit-text-stroke:0.3px #fff;">Показать фильтры</div>
<div class="t" style="left:657.9px;top:254px;font-size:13px;color:#fff;transform:scaleX(1.154);-webkit-text-stroke:0.3px #fff;">Добавить запись</div>
<div class="t" style="left:349.3px;top:332px;font-size:13px;color:#1c1c1c;transform:scaleX(1.186);-webkit-text-stroke:0.45px #1c1c1c;">№ контроля</div>
<div class="t" style="left:500.9px;top:332px;font-size:13px;color:#1c1c1c;transform:scaleX(1.125);-webkit-text-stroke:0.45px #1c1c1c;">Статус</div>
<div class="t" style="left:662.4px;top:332px;font-size:13px;color:#1c1c1c;transform:scaleX(1.154);-webkit-text-stroke:0.45px #1c1c1c;">Дата и время</div>
<div class="t" style="left:838.1px;top:332px;font-size:13px;color:#1c1c1c;letter-spacing:0.13px;transform:scaleX(1.200);-webkit-text-stroke:0.45px #1c1c1c;">КПП</div>
<div class="t" style="left:1039.5px;top:332px;font-size:13px;color:#1c1c1c;letter-spacing:0.19px;transform:scaleX(1.200);-webkit-text-stroke:0.45px #1c1c1c;">Фото</div>
<div class="t" style="left:1104.4px;top:332px;font-size:13px;color:#1c1c1c;letter-spacing:0.17px;transform:scaleX(1.200);-webkit-text-stroke:0.45px #1c1c1c;">Груз</div>
<div class="t" style="left:1180.1px;top:332px;font-size:13px;color:#1c1c1c;transform:scaleX(1.181);-webkit-text-stroke:0.45px #1c1c1c;">Сопровожд.</div>
<div class="t" style="left:1307.5px;top:332px;font-size:13px;color:#1c1c1c;letter-spacing:0.20px;transform:scaleX(1.200);-webkit-text-stroke:0.45px #1c1c1c;">Источник</div>
<div class="t" style="left:1415.8px;top:332px;font-size:13px;color:#1c1c1c;transform:scaleX(1.195);-webkit-text-stroke:0.45px #1c1c1c;">Контроль</div>
<div class="t" style="left:1725.3px;top:332px;font-size:13px;color:#1c1c1c;transform:scaleX(1.190);-webkit-text-stroke:0.45px #1c1c1c;">Управление</div>
<div class="t" style="left:349.0px;top:387px;font-size:15px;color:#4d4d4d;transform:scaleX(0.958);">1423569</div>
<div class="t" style="left:501.2px;top:389px;font-size:13px;color:#f5923e;transform:scaleX(1.158);">На территории</div>
<div class="t" style="left:661.5px;top:387px;font-size:15px;color:#4d4d4d;transform:scaleX(0.957);">08-11-2023</div>
<div class="t" style="left:737.7px;top:387px;font-size:15px;color:#4d4d4d;letter-spacing:-0.40px;transform:scaleX(0.860);">16:21:53</div>
<div class="t" style="left:838.9px;top:387px;font-size:15px;color:#4d4d4d;transform:scaleX(1.011);">КПП№1</div>
<div class="t" style="left:897.2px;top:387px;font-size:15px;color:#4d4d4d;transform:scaleX(1.055);">(Основное)</div>
<div class="t" style="left:1417.0px;top:378px;font-size:15px;color:#aaa;transform:scaleX(1.039);">АО &quot;МКМ&quot;</div>
<div class="t" style="left:1416.7px;top:399px;font-size:13px;color:#444;transform:scaleX(1.062);">Администратор Админов Админович</div>
<div class="t" style="left:349.0px;top:447px;font-size:15px;color:#4d4d4d;transform:scaleX(0.963);">1423568</div>
<div class="t" style="left:501.2px;top:449px;font-size:13px;color:#4aa3df;letter-spacing:0.08px;transform:scaleX(1.160);">Вне территории</div>
<div class="t" style="left:661.5px;top:447px;font-size:15px;color:#4d4d4d;transform:scaleX(0.957);">08-11-2023</div>
<div class="t" style="left:737.7px;top:447px;font-size:15px;color:#4d4d4d;letter-spacing:-0.15px;transform:scaleX(0.860);">16:21:47</div>
<div class="t" style="left:838.9px;top:447px;font-size:15px;color:#4d4d4d;transform:scaleX(1.011);">КПП№1</div>
<div class="t" style="left:897.2px;top:447px;font-size:15px;color:#4d4d4d;transform:scaleX(1.055);">(Основное)</div>
<div class="t" style="left:1417.0px;top:438px;font-size:15px;color:#aaa;transform:scaleX(1.039);">АО &quot;МКМ&quot;</div>
<div class="t" style="left:1416.7px;top:459px;font-size:13px;color:#444;transform:scaleX(1.062);">Администратор Админов Админович</div>
<div class="t" style="left:349.0px;top:507px;font-size:15px;color:#4d4d4d;transform:scaleX(0.958);">1423567</div>
<div class="t" style="left:501.2px;top:509px;font-size:13px;color:#f5923e;transform:scaleX(1.158);">На территории</div>
<div class="t" style="left:661.5px;top:507px;font-size:15px;color:#4d4d4d;transform:scaleX(0.957);">08-11-2023</div>
<div class="t" style="left:737.7px;top:507px;font-size:15px;color:#4d4d4d;letter-spacing:-0.15px;transform:scaleX(0.860);">16:21:38</div>
<div class="t" style="left:838.9px;top:507px;font-size:15px;color:#4d4d4d;transform:scaleX(1.011);">КПП№1</div>
<div class="t" style="left:897.2px;top:507px;font-size:15px;color:#4d4d4d;transform:scaleX(1.055);">(Основное)</div>
<div class="t" style="left:1417.0px;top:498px;font-size:15px;color:#aaa;transform:scaleX(1.039);">АО &quot;МКМ&quot;</div>
<div class="t" style="left:1416.7px;top:519px;font-size:13px;color:#444;transform:scaleX(1.062);">Администратор Админов Админович</div>
<div class="t" style="left:349.0px;top:567px;font-size:15px;color:#4d4d4d;transform:scaleX(0.958);">1423566</div>
<div class="t" style="left:501.2px;top:569px;font-size:13px;color:#5cb85c;transform:scaleX(1.153);">Выдан</div>
<div class="t" style="left:661.5px;top:567px;font-size:15px;color:#4d4d4d;transform:scaleX(0.957);">08-11-2023</div>
<div class="t" style="left:737.7px;top:567px;font-size:15px;color:#4d4d4d;letter-spacing:-0.15px;transform:scaleX(0.860);">16:21:37</div>
<div class="t" style="left:838.9px;top:567px;font-size:15px;color:#4d4d4d;transform:scaleX(1.011);">КПП№1</div>
<div class="t" style="left:897.2px;top:567px;font-size:15px;color:#4d4d4d;transform:scaleX(1.055);">(Основное)</div>
<div class="t" style="left:1417.0px;top:558px;font-size:15px;color:#aaa;transform:scaleX(1.039);">АО &quot;МКМ&quot;</div>
<div class="t" style="left:1416.7px;top:579px;font-size:13px;color:#444;transform:scaleX(1.062);">Администратор Админов Админович</div>
<div class="t" style="left:349.0px;top:627px;font-size:15px;color:#4d4d4d;transform:scaleX(0.954);">1423547</div>
<div class="t" style="left:501.3px;top:629px;font-size:13px;color:#444;transform:scaleX(1.148);">Создан</div>
<div class="t" style="left:661.5px;top:627px;font-size:15px;color:#4d4d4d;transform:scaleX(0.957);">08-11-2023</div>
<div class="t" style="left:737.7px;top:627px;font-size:15px;color:#4d4d4d;letter-spacing:-0.10px;transform:scaleX(0.860);">16:17:42</div>
<div class="t" style="left:838.2px;top:627px;font-size:15px;color:#444;transform:scaleX(1.130);">-</div>
<div class="t" style="left:1417.0px;top:618px;font-size:15px;color:#aaa;transform:scaleX(1.039);">АО &quot;МКМ&quot;</div>
<div class="t" style="left:1416.7px;top:639px;font-size:13px;color:#444;transform:scaleX(1.062);">Администратор Админов Админович</div>
<div class="t" style="left:337.3px;top:721px;font-size:15px;color:#444;transform:scaleX(1.056);">Показывать на странице</div>
<div class="t" style="left:542.1px;top:721px;font-size:15px;color:#555;letter-spacing:0.31px;transform:scaleX(1.130);">50</div>
<div class="t" style="left:1780.6px;top:857px;font-size:14px;color:#222;transform:scaleX(1.195);-webkit-text-stroke:0.25px #222;">Назад</div>
<div class="t" style="left:1312.0px;top:392px;font-size:10px;color:#c2c2c2;transform:scaleX(1.042);-webkit-text-stroke:0.2px #c2c2c2;">ОЗ</div>
<div class="t" style="left:1312.0px;top:452px;font-size:10px;color:#c2c2c2;transform:scaleX(1.042);-webkit-text-stroke:0.2px #c2c2c2;">ОЗ</div>
<div class="t" style="left:1312.0px;top:512px;font-size:10px;color:#c2c2c2;transform:scaleX(1.042);-webkit-text-stroke:0.2px #c2c2c2;">ОЗ</div>
<div class="t" style="left:1312.0px;top:572px;font-size:10px;color:#c2c2c2;transform:scaleX(1.042);-webkit-text-stroke:0.2px #c2c2c2;">ОЗ</div>
<div class="t" style="left:1312.0px;top:632px;font-size:10px;color:#c2c2c2;transform:scaleX(1.042);-webkit-text-stroke:0.2px #c2c2c2;">ОЗ</div>
</body></html>
